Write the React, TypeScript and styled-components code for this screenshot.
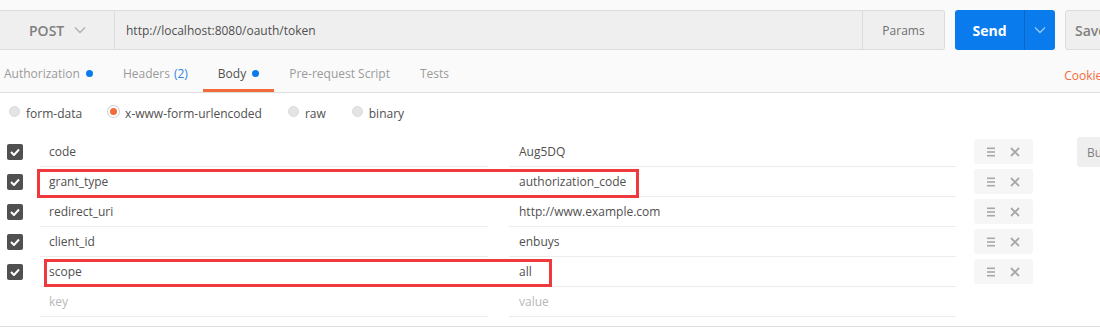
import styled, { createGlobalStyle } from "styled-components";

const GlobalStyle = createGlobalStyle`
  body {
    margin: 0;
    background: #fafafa;
    font-family: "Open Sans", "Liberation Sans", sans-serif;
    font-size: 12px;
    color: #505050;
    overflow: hidden;
  }
`;

const Page = styled.div`
  width: 1100px;
  height: 327px;
  overflow: hidden;
  padding-top: 10px;
  box-sizing: border-box;
`;

const UrlBar = styled.div`
  display: flex;
  height: 40px;
  white-space: nowrap;
  & > * {
    flex-shrink: 0;
  }
`;

const UrlGroup = styled.div`
  display: flex;
  width: 945px;
  background: #efefef;
  border: 1px solid #dcdcdc;
  border-left: none;
  border-radius: 0 3px 3px 0;
  box-sizing: border-box;
`;

const Method = styled.div`
  width: 115px;
  display: flex;
  align-items: center;
  padding-left: 29px;
  gap: 10px;
  box-sizing: border-box;
  border-right: 1px solid #dcdcdc;
  font-size: 14px;
  font-weight: 600;
  color: #808080;
`;

const UrlText = styled.div`
  flex: 1;
  display: flex;
  align-items: center;
  padding-left: 11px;
  color: #505050;
`;

const Params = styled.div`
  width: 81px;
  display: flex;
  align-items: center;
  justify-content: center;
  border-left: 1px solid #dcdcdc;
  color: #707070;
`;

const SendButton = styled.div`
  display: flex;
  margin-left: 10px;
  width: 100px;
  background: #097bed;
  border-radius: 3px;
  color: #fff;
`;

const SendLabel = styled.div`
  width: 69px;
  display: flex;
  align-items: center;
  justify-content: center;
  font-size: 14px;
  font-weight: 700;
  border-right: 1px solid #0a66c4;
`;

const SendArrow = styled.div`
  flex: 1;
  display: flex;
  align-items: center;
  justify-content: center;
`;

const SaveButton = styled.div`
  margin-left: 10px;
  width: 80px;
  background: #efefef;
  border: 1px solid #dcdcdc;
  border-radius: 3px;
  display: flex;
  align-items: center;
  padding-left: 9px;
  box-sizing: border-box;
  font-size: 14px;
  font-weight: 600;
  color: #808080;
`;

const TabBar = styled.div`
  display: flex;
  height: 43px;
  padding-left: 4px;
  border-bottom: 1px solid #dedede;
  box-sizing: border-box;
  white-space: nowrap;
`;

const Tab = styled.div<{ $active?: boolean }>`
  display: flex;
  align-items: center;
  gap: 6px;
  padding: 8px 15px 0;
  color: ${(p) => (p.$active ? "#505050" : "#9a9a9a")};
  border-bottom: 3px solid ${(p) => (p.$active ? "#f26b3a" : "transparent")};
  &:first-child {
    padding-left: 0;
  }
`;

const Dot = styled.span`
  width: 7px;
  height: 7px;
  border-radius: 50%;
  background: #097bed;
`;

const Count = styled.span`
  color: #2f86e0;
  margin-left: -2px;
`;

const Cookies = styled.div`
  margin-left: auto;
  margin-right: -8px;
  display: flex;
  align-items: center;
  padding-top: 8px;
  color: #f26b3a;
`;

const Body = styled.div`
  background: #fff;
  height: 234px;
  border-bottom: 1px solid #dedede;
  box-sizing: border-box;
`;

const RadioRow = styled.div`
  display: flex;
  align-items: center;
  height: 40px;
  padding-left: 9px;
  gap: 26px;
`;

const RadioOption = styled.label`
  display: flex;
  align-items: center;
  gap: 6px;
  color: #505050;
`;

const Radio = styled.span<{ $on?: boolean }>`
  width: 11px;
  height: 11px;
  border-radius: 50%;
  box-sizing: border-box;
  background: ${(p) => (p.$on ? "#f26b3a" : "#e4e4e4")};
  border: ${(p) => (p.$on ? "2px solid #fff" : "1px solid #dadada")};
  box-shadow: ${(p) => (p.$on ? "0 0 0 1px #d0d0d0" : "none")};
  margin-bottom: 4px;
`;

const Table = styled.div`
  padding-top: 4px;
  display: flex;
  flex-direction: column;
`;

const Row = styled.div`
  position: relative;
  display: flex;
  height: 30px;
  white-space: nowrap;
  & > * {
    flex-shrink: 0;
  }
`;

const CheckCell = styled.div`
  width: 40px;
  display: flex;
  align-items: center;
  padding-left: 7px;
  box-sizing: border-box;
`;

const CheckBox = styled.span`
  width: 16px;
  height: 16px;
  border-radius: 2px;
  background: #505050;
  display: flex;
  align-items: center;
  justify-content: center;
`;

const Cell = styled.div<{ $width: number; $muted?: boolean }>`
  width: ${(p) => p.$width}px;
  display: flex;
  align-items: center;
  padding-left: 9px;
  box-sizing: border-box;
  border-bottom: 1px solid #ececec;
  color: ${(p) => (p.$muted ? "#b8b8b8" : "#505050")};
`;

const ValueCell = styled(Cell)`
  margin-left: 21px;
  padding-left: 10px;
`;

const Actions = styled.div`
  margin: 2px 0 0 18px;
  width: 59px;
  height: 25px;
  background: #f6f6f6;
  border-radius: 3px;
  display: flex;
  align-items: center;
  justify-content: space-around;
  padding: 0 6px;
  box-sizing: border-box;
`;

const BulkButton = styled.div`
  margin-left: 44px;
  width: 80px;
  height: 30px;
  background: #efefef;
  border-radius: 3px;
  display: flex;
  align-items: center;
  padding-left: 10px;
  box-sizing: border-box;
  color: #808080;
`;

const Highlight = styled.div<{ $left: number; $top: number; $width: number; $height: number }>`
  position: absolute;
  left: ${(p) => p.$left}px;
  top: ${(p) => p.$top}px;
  width: ${(p) => p.$width}px;
  height: ${(p) => p.$height}px;
  border: 3px solid #ee3a3d;
  box-sizing: border-box;
  pointer-events: none;
`;

const Chevron = ({ color }: { color: string }) => (
  <svg width="12" height="8" viewBox="0 0 12 8">
    <path d="M1 1.5 L6 6.5 L11 1.5" fill="none" stroke={color} strokeWidth="1.3" />
  </svg>
);

const Check = () => (
  <svg width="10" height="8" viewBox="0 0 10 8">
    <path d="M1 4 L4 7 L9 1.5" fill="none" stroke="#fff" strokeWidth="2" />
  </svg>
);

const Menu = () => (
  <svg width="8" height="10" viewBox="0 0 8 10">
    <rect x="0" y="0.5" width="8" height="1.6" fill="#a8a8a8" />
    <rect x="0" y="4.2" width="8" height="1.6" fill="#a8a8a8" />
    <rect x="0" y="7.9" width="8" height="1.6" fill="#a8a8a8" />
  </svg>
);

const Cross = () => (
  <svg width="10" height="10" viewBox="0 0 10 10">
    <path d="M1 1 L9 9 M9 1 L1 9" stroke="#a8a8a8" strokeWidth="1.8" />
  </svg>
);

type Param = {
  key: string;
  value: string;
  mark?: { left: number; top: number; width: number; height: number };
};

const params: Param[] = [
  { key: "code", value: "Aug5DQ" },
  { key: "grant_type", value: "authorization_code", mark: { left: 37, top: 2, width: 602, height: 29 } },
  { key: "redirect_uri", value: "http://www.example.com" },
  { key: "client_id", value: "enbuys" },
  { key: "scope", value: "all", mark: { left: 44, top: 2, width: 508, height: 28 } },
];

export default function App() {
  return (
    <Page>
      <GlobalStyle />
      <UrlBar>
        <UrlGroup>
          <Method>
            POST <Chevron color="#b0b0b0" />
          </Method>
          <UrlText>http://localhost:8080/oauth/token</UrlText>
          <Params>Params</Params>
        </UrlGroup>
        <SendButton>
          <SendLabel>Send</SendLabel>
          <SendArrow>
            <Chevron color="#9cc8f5" />
          </SendArrow>
        </SendButton>
        <SaveButton>Save</SaveButton>
      </UrlBar>

      <TabBar>
        <Tab>
          Authorization <Dot />
        </Tab>
        <Tab>
          Headers <Count>(2)</Count>
        </Tab>
        <Tab $active>
          Body <Dot />
        </Tab>
        <Tab>Pre-request Script</Tab>
        <Tab>Tests</Tab>
        <Cookies>Cookies</Cookies>
      </TabBar>

      <Body>
        <RadioRow>
          <RadioOption>
            <Radio /> form-data
          </RadioOption>
          <RadioOption>
            <Radio $on /> x-www-form-urlencoded
          </RadioOption>
          <RadioOption>
            <Radio /> raw
          </RadioOption>
          <RadioOption>
            <Radio /> binary
          </RadioOption>
        </RadioRow>

        <Table>
          {params.map((p, i) => (
            <Row key={p.key}>
              <CheckCell>
                <CheckBox>
                  <Check />
                </CheckBox>
              </CheckCell>
              <Cell $width={448}>{p.key}</Cell>
              <ValueCell $width={447}>{p.value}</ValueCell>
              <Actions>
                <Menu />
                <Cross />
              </Actions>
              {i === 0 && <BulkButton>Bulk Edit</BulkButton>}
              {p.mark && <Highlight $left={p.mark.left} $top={p.mark.top} $width={p.mark.width} $height={p.mark.height} />}
            </Row>
          ))}
          <Row>
            <CheckCell />
            <Cell $width={448} $muted>
              key
            </Cell>
            <ValueCell $width={447} $muted>
              value
            </ValueCell>
          </Row>
        </Table>
      </Body>
    </Page>
  );
}
